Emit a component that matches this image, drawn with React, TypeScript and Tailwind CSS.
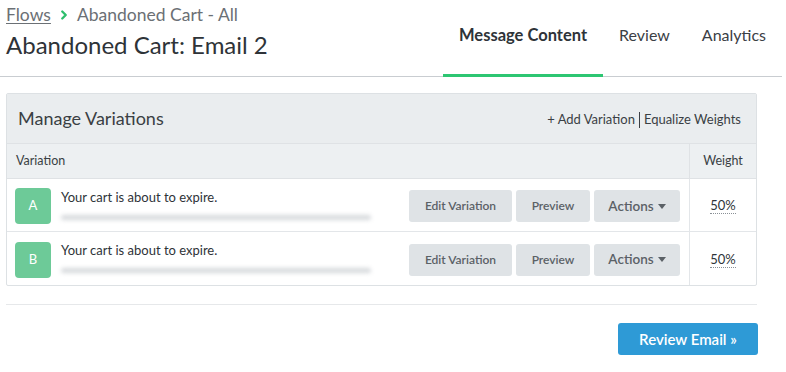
import { ChevronRight } from 'lucide-react';

const rows = [
  { id: 'A', subject: 'Your cart is about to expire.', weight: '50%' },
  { id: 'B', subject: 'Your cart is about to expire.', weight: '50%' },
];

export default function App() {
  return (
    <div className="w-[786px] h-[372px] bg-white font-['Lato','Open_Sans',sans-serif] text-[#2e3338] overflow-hidden">
      {/* Top header */}
      <div className="w-[782px] h-[77px] border-b border-[#c9cdd1] flex justify-between">
        <div className="pl-[6px] pt-[4px]">
          <div className="flex items-center text-[17.5px] text-[#6b7075] leading-[22px]">
            <span className="underline underline-offset-2 decoration-1">Flows</span>
            <ChevronRight size={14} strokeWidth={4} className="text-[#2dbe6c] mx-[6px]" />
            <span>Abandoned Cart - All</span>
          </div>
          <h1 className="text-[24px] leading-[28px] mt-[5px] text-[#2e3338]">Abandoned Cart: Email 2</h1>
        </div>

        <div className="flex h-[77px] text-[16px]">
          <div className="px-4 pt-[23px] border-b-[3px] border-[#2dc672] font-bold text-[16.5px] text-[#2e3338]">Message Content</div>
          <div className="px-4 pt-[23px] text-[#3b4045]">Review</div>
          <div className="px-4 pt-[23px] text-[#3b4045]">Analytics</div>
        </div>
      </div>

      {/* Variations panel */}
      <div className="ml-[6px] mt-[16px] w-[751px] border border-[#dde1e4] rounded-[2px]">
        <div className="h-[50px] bg-[#eaedef] flex items-center justify-between pl-[11px] pr-[15px] border-b border-[#dfe2e5]">
          <h2 className="text-[18px] text-[#3a3f44]">Manage Variations</h2>
          <div className="flex items-center text-[13px] text-[#3a3f44] pt-[3px]">
            <span>+ Add Variation</span>
            <span className="w-px h-[16px] bg-[#3a3f44] mx-[4px]" />
            <span>Equalize Weights</span>
          </div>
        </div>

        <div className="flex h-[35px] bg-[#edf0f2] border-b border-[#dfe2e5] text-[12.5px] text-[#3a3f44]">
          <div className="flex-1 flex items-center pl-[9px]">Variation</div>
          <div className="w-[67px] border-l border-[#dfe2e5] flex items-center justify-center">Weight</div>
        </div>

        {rows.map((r, i) => (
          <div
            key={r.id}
            className={`flex h-[53px] ${i < rows.length - 1 ? 'border-b border-[#e3e6e9]' : ''}`}
          >
            <div className="flex-1 flex items-center pl-[8px] pr-[9px] pt-[2px]">
              <div className="w-[36px] h-[36px] rounded-[4px] bg-[#6dca98] text-white text-[13px] flex items-center justify-center">
                {r.id}
              </div>
              <div className="ml-[10px] flex-1 self-start pt-[9px]">
                <div className="text-[13px] text-[#2e3338] leading-[15px]">{r.subject}</div>
                <div className="mt-[10px] w-[310px] h-[5px] rounded-full bg-[#d6d9dc] blur-[2px]" />
              </div>
              <div className="flex gap-[4px]">
                <button className="w-[103px] h-[32px] rounded-[3px] bg-[#dfe3e6] text-[12px] font-semibold text-[#5b6166]">
                  Edit Variation
                </button>
                <button className="w-[74px] h-[32px] rounded-[3px] bg-[#dfe3e6] text-[12px] font-semibold text-[#5b6166]">
                  Preview
                </button>
                <button className="w-[86px] h-[32px] rounded-[3px] bg-[#dfe3e6] text-[13.5px] font-semibold text-[#5b6166] flex items-center justify-center gap-[4px]">
                  Actions
                  <svg width="8" height="5" viewBox="0 0 8 5">
                    <path d="M0 0 L8 0 L4 5 Z" fill="#5b6166" />
                  </svg>
                </button>
              </div>
            </div>
            <div className="w-[67px] border-l border-[#e3e6e9] flex items-center justify-center pt-[2px]">
              <span className="text-[13px] text-[#2e3338] border-b border-dotted border-[#8a9096] leading-[15px]">
                {r.weight}
              </span>
            </div>
          </div>
        ))}
      </div>

      <div className="ml-[6px] mt-[18px] w-[751px] border-t border-[#e6e8ea]" />

      <div className="w-[758px] flex justify-end mt-[18px]">
        <button className="w-[140px] h-[32px] rounded-[3px] bg-[#2e9ad6] text-white text-[15px] font-semibold">
          Review Email »
        </button>
      </div>
    </div>
  );
}
